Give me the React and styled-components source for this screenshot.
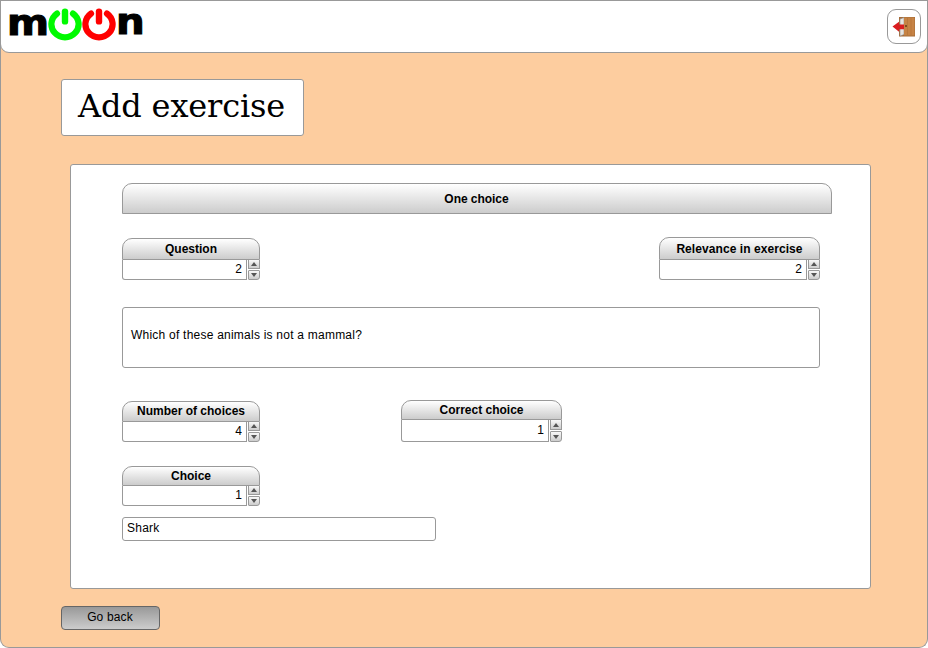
import React from "react";
import styled, { createGlobalStyle } from "styled-components";

const GlobalStyle = createGlobalStyle`
  * { box-sizing: border-box; }
  html, body { margin: 0; background: #fff; }
  body { font-family: "Liberation Sans", Arial, sans-serif; font-size: 12px; color: #000; }
  button, input, textarea { font: inherit; color: inherit; }
`;

const Frame = styled.div`
  width: 928px;
  height: 648px;
  display: flex;
  flex-direction: column;
  align-items: flex-start;
  background: #fdcd9f;
  border: 1px solid #999;
  border-top: 0;
  border-radius: 0 0 9px 9px;
  overflow: hidden;
`;

const TopBar = styled.header`
  width: 928px;
  height: 53px;
  margin: 0 -1px;
  padding: 7px 6px 0 6px;
  display: flex;
  flex-shrink: 0;
  justify-content: space-between;
  align-items: flex-start;
  background: #fff;
  border: 1px solid #999;
  border-radius: 0 0 9px 9px;
`;

const Logo = styled.div`
  display: flex;
  align-items: flex-start;
  height: 36px;
  svg { display: block; flex-shrink: 0; }
`;

const LogoLetter = styled.span`
  width: ${(p) => p.$width}px;
  font: bold 36px/37px "DejaVu Sans", sans-serif;
  -webkit-text-stroke: 1.1px #000;
  margin-top: ${(p) => p.$top || 0}px;
  white-space: nowrap;
  transform: scaleX(${(p) => p.$scale || 1});
  transform-origin: left;
`;

const ExitButton = styled.button`
  width: 34px;
  height: 35px;
  margin-top: 1px;
  padding: 0;
  display: flex;
  align-items: center;
  justify-content: center;
  background: #fff;
  border: 1px solid #999;
  border-radius: 9px;
`;

const Title = styled.h1`
  width: 243px;
  height: 57px;
  margin: 26px 0 0 60px;
  padding-left: 16px;
  font: normal 32px/52px "DejaVu Serif", serif;
  letter-spacing: -0.16px;
  white-space: nowrap;
  background: #fff;
  border: 1px solid #999;
  border-radius: 3px;
`;

const Panel = styled.main`
  width: 801px;
  height: 425px;
  margin: 28px 0 0 69px;
  padding: 18px 0 0 51px;
  background: #fff;
  border: 1px solid #999;
  border-radius: 3px;
`;

const SectionHeading = styled.h2`
  width: 710px;
  height: 31px;
  margin: 0;
  padding-right: 1px;
  font-size: 12px;
  line-height: 30px;
  letter-spacing: -0.04px;
  text-align: center;
  background: linear-gradient(#fff, #ccc);
  border: 1px solid #999;
  border-radius: 10px 10px 0 0;
`;

const FieldRow = styled.div`
  width: 698px;
  display: flex;
  align-items: flex-end;
  gap: ${(p) => p.$gap || 0}px;
  margin-top: ${(p) => p.$top}px;
`;

const Field = styled.label`
  display: block;
  width: ${(p) => p.$width}px;
`;

const FieldLabel = styled.span`
  display: block;
  height: ${(p) => p.$height}px;
  font-weight: bold;
  line-height: ${(p) => p.$line}px;
  letter-spacing: ${(p) => p.$spacing}px;
  text-align: center;
  background: linear-gradient(#fff, #ccc);
  border: 1px solid #999;
  border-radius: 10px 10px 0 0;
`;

const FieldBody = styled.span`
  display: flex;
  height: ${(p) => p.$height}px;
`;

const NumberInput = styled.input`
  flex: 1;
  min-width: 0;
  padding: 0 4px 1px;
  text-align: right;
  background: #fff;
  border: 1px solid #999;
  border-top: 0;
  border-radius: 0 0 0 3px;
  outline: 0;
`;

const Spinner = styled.span`
  width: 12px;
  margin-left: 1px;
  display: flex;
  flex-direction: column;
  gap: 1px;
`;

const StepButton = styled.button`
  flex: 1;
  min-height: 0;
  padding: 0;
  display: flex;
  align-items: center;
  justify-content: center;
  background: linear-gradient(#f8f8f8, #ccc);
  border: 1px solid #999;
  border-top-width: ${(p) => (p.$up ? 0 : 1)}px;
  border-radius: ${(p) => (p.$up ? "0" : "1px 1px 3px 1px")};
  svg { display: block; }
`;

const QuestionText = styled.textarea`
  display: block;
  width: 698px;
  height: 61px;
  margin-top: 27px;
  padding: 20px 8px 0;
  line-height: 14px;
  letter-spacing: 0.23px;
  resize: none;
  background: #fff;
  border: 1px solid #999;
  border-radius: 3px;
  outline: 0;
`;

const AnswerInput = styled.input`
  display: block;
  width: 314px;
  height: 24px;
  margin-top: 11px;
  padding: 0 4px 2px;
  letter-spacing: 0.25px;
  background: #fff;
  border: 1px solid #999;
  border-radius: 3px;
  outline: 0;
`;

const BackButton = styled.button`
  width: 99px;
  height: 24px;
  margin: 17px 0 0 60px;
  padding: 0 1px 2px 0;
  letter-spacing: 0.15px;
  background: linear-gradient(#999, #ccc);
  border: 1px solid #666;
  border-radius: 4px;
`;

function PowerIcon({ color }) {
  return (
    <svg width="34" height="33" viewBox="0 0 34 33" fill="none" stroke={color}>
      <path d="M9 5.6A13.6 13.1 0 1 0 25 5.6" strokeWidth="6.2" strokeLinecap="round" />
      <path d="M17 3.6V13.4" strokeWidth="6.4" strokeLinecap="round" />
    </svg>
  );
}

function DoorIcon() {
  return (
    <svg width="24" height="22" viewBox="0 0 24 22">
      <rect x="7" y="1" width="16" height="19.5" fill="#a56a37" />
      <path d="M8 3l4-1.5v17L8 20z" fill="#e8e4e0" stroke="#8a8a86" strokeWidth=".6" />
      <rect x="12" y="1.5" width="10.5" height="18" fill="#c68345" />
      <path d="M15.5 2v17M19 2v17" stroke="#b87538" strokeWidth=".8" />
      <circle cx="14" cy="10" r="1" fill="#683713" />
      <path d="M.5 10.6L7 5.8v2.6H12v4.8H7v2.6z" fill="#d91d20" />
    </svg>
  );
}

function Arrow({ up }) {
  return (
    <svg width="6" height="4" viewBox="0 0 6 4">
      <path d={up ? "M0 4L3 0 6 4z" : "M0 0H6L3 4z"} fill="#555" />
    </svg>
  );
}

function NumberField({ label, value, width, labelHeight, line, spacing = 0, bodyHeight = 20 }) {
  return (
    <Field $width={width}>
      <FieldLabel $height={labelHeight} $line={line} $spacing={spacing}>{label}</FieldLabel>
      <FieldBody $height={bodyHeight}>
        <NumberInput defaultValue={value} />
        <Spinner>
          <StepButton $up aria-label={`Increase ${label}`}><Arrow up /></StepButton>
          <StepButton aria-label={`Decrease ${label}`}><Arrow /></StepButton>
        </Spinner>
      </FieldBody>
    </Field>
  );
}

const Spread = styled(FieldRow)`
  justify-content: space-between;
`;

export default function App() {
  return (
    <>
      <GlobalStyle />
      <Frame>
        <TopBar>
          <Logo>
            <LogoLetter $width={41} $top={-4} $scale={1.12}>m</LogoLetter>
            <PowerIcon color="#00fa00" />
            <PowerIcon color="#ff0000" />
            <LogoLetter $width={28} $top={-5} $scale={1.12}>n</LogoLetter>
          </Logo>
          <ExitButton aria-label="Exit"><DoorIcon /></ExitButton>
        </TopBar>
        <Title>Add exercise</Title>
        <Panel>
          <SectionHeading>One choice</SectionHeading>
          <Spread $top={23}>
            <NumberField label="Question" value="2" width={138} labelHeight={22} line={20} />
            <NumberField label="Relevance in exercise" value="2" width={161} labelHeight={23} line={22} spacing={0.07} />
          </Spread>
          <QuestionText defaultValue="Which of these animals is not a mammal?" />
          <FieldRow $top={32} $gap={141}>
            <NumberField label="Number of choices" value="4" width={138} labelHeight={21} line={18} />
            <NumberField label="Correct choice" value="1" width={161} labelHeight={20} line={18} bodyHeight={22} />
          </FieldRow>
          <FieldRow $top={24}>
            <NumberField label="Choice" value="1" width={138} labelHeight={20} line={18} />
          </FieldRow>
          <AnswerInput defaultValue="Shark" />
        </Panel>
        <BackButton>Go back</BackButton>
      </Frame>
    </>
  );
}
